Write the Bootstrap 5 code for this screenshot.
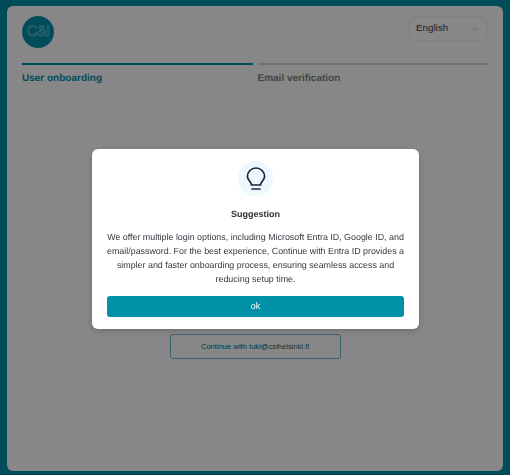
<!DOCTYPE html>
<html lang="en">
<head>
  <meta charset="UTF-8">
  <meta name="viewport" content="width=device-width, initial-scale=1.0">
  <title>User onboarding</title>
  <link href="https://cdn.jsdelivr.net/npm/bootstrap@5.3.0/dist/css/bootstrap.min.css" rel="stylesheet">
  <style>
    html, body { height: 100%; }
    body { background: #0091a8; font-family: "Liberation Sans", Arial, sans-serif; color: #212529; overflow: hidden; text-rendering: geometricPrecision; }
    .page-frame { height: 475px; padding: 6px 7px 4px 7px; }
    .page-panel { height: 100%; background: #fff; border-radius: 6px; padding: 10px 15px 0; }
    .logo-disc { width: 32px; height: 32px; border-radius: 50%; background: #0091a8; color: transparent; font-size: 15px; letter-spacing: -.8px; line-height: 32px; text-align: center; -webkit-text-stroke: .5px #8fd0da; }
    .lang-select { width: 80px; height: 25px; padding: 0 0 0 7px; font-size: 9.8px; color: #3a3f44; border-color: #f0f1f3; border-radius: 6px; background-size: 10px 8px; background-position: right 7px center; background-image: url("data:image/svg+xml,%3csvg xmlns='http://www.w3.org/2000/svg' viewBox='0 0 16 16'%3e%3cpath fill='none' stroke='%23c4c9ce' stroke-width='2' d='m2 5 6 6 6-6'/%3e%3c/svg%3e"); }
    .step-tabs { margin-top: 15px; gap: 5px; }
    .step-item { flex: 1 1 0; border-top: 2px solid #d8d8d8; padding-top: 7px; font-size: 10px; font-weight: 700; line-height: 13px; color: #7d8186; }
    .step-item.is-on { border-top-color: #0091a8; color: #0091a8; }
    .login-area { margin-top: 249px; }
    .login-alt { width: 171px; height: 25px; padding: 0; font-size: 7.6px; color: #006a7c; border: 1px solid #66bdcb; border-radius: 3px; background: #fff; }
    .dim-layer { position: fixed; inset: 0; background: rgba(0, 0, 0, .47); padding-top: 149px; }
    .hint-box { width: 327px; height: 180px; margin-left: 92px; background: #fff; border-radius: 6px; padding: 12px 15px; box-shadow: 0 2px 6px rgba(0, 0, 0, .2); text-align: center; }
    .hint-icon { width: 35px; height: 35px; border-radius: 50%; background: #ecf8fd; margin: 0 auto; }
    .hint-title { font-size: 9px; font-weight: 700; line-height: 12px; margin: 12px 0 0; color: #2b2f33; }
    .hint-text { font-size: 8.9px; line-height: 14px; margin: 10px 0 0; color: #343a40; }
    .hint-ok { height: 21px; padding: 0; margin-top: 10px; font-size: 9px; background: #0091a8; border: 0; border-radius: 3px; color: #fff; }
  </style>
</head>
<body>
  <div class="page-frame">
    <div class="page-panel">
      <div class="d-flex justify-content-between align-items-start">
        <div class="logo-disc">C&amp;I</div>
        <select class="form-select lang-select">
          <option>English</option>
        </select>
      </div>
      <div class="d-flex step-tabs">
        <div class="step-item is-on">User onboarding</div>
        <div class="step-item">Email verification</div>
      </div>
      <div class="d-flex justify-content-center login-area">
        <button class="btn login-alt">Continue with tuki@csihelsinki.fi</button>
      </div>
    </div>
  </div>

  <div class="dim-layer">
    <div class="hint-box">
      <div class="hint-icon d-flex align-items-center justify-content-center">
        <svg width="22" height="24" viewBox="0 0 22 24" fill="none" stroke="#1c2340" stroke-width="1.7" stroke-linecap="round">
          <path d="M6.5 18 C6.5 15 2.4 13 2.4 9.6 a8.6 8.6 0 0 1 17.2 0 C19.6 13 15.5 15 15.5 18 Z"/>
          <path d="M7 22 H15"/>
        </svg>
      </div>
      <p class="hint-title">Suggestion</p>
      <p class="hint-text">We offer multiple login options, including Microsoft Entra ID, Google ID, and email/password. For the best experience, Continue with Entra ID provides a simpler and faster onboarding process, ensuring seamless access and reducing setup time.</p>
      <button class="btn w-100 hint-ok">ok</button>
    </div>
  </div>

  <script src="https://cdn.jsdelivr.net/npm/bootstrap@5.3.0/dist/js/bootstrap.bundle.min.js"></script>
</body>
</html>
